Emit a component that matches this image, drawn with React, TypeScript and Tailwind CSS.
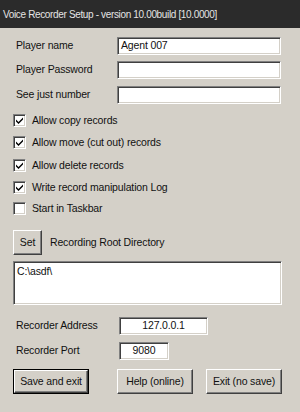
import React from "react";

const sunken =
  "bg-white border border-t-[#808080] border-l-[#808080] border-b-white border-r-white shadow-[inset_1px_1px_0_#404040,inset_-1px_-1px_0_#d4d0c8]";

const raised =
  "bg-[#d4d0c8] border border-t-white border-l-white border-b-[#404040] border-r-[#404040] shadow-[inset_-1px_-1px_0_#808080]";

const Field = (props: {
  label: string;
  value?: string;
  top: string;
  width?: string;
  labelWidth?: string;
  center?: boolean;
}) => {
  const { label, value, top, width, labelWidth, center } = props;
  return (
    <div className={`flex items-center h-[18px] ${top}`}>
      <span className={`${labelWidth ?? "w-[117px]"} shrink-0 pl-[16px] whitespace-nowrap`}>{label}</span>
      <div
        className={`${sunken} h-[18px] ${width ?? "w-[164px]"} shrink-0 flex items-center px-[3px] ${
          center ? "justify-center" : ""
        }`}
      >
        {value}
      </div>
    </div>
  );
};

const Check = (props: { label: string; checked?: boolean; top: string }) => {
  const { label, checked, top } = props;
  return (
    <div className={`flex items-center h-[13px] pl-[13px] ${top}`}>
      <div className={`${sunken} w-[13px] h-[13px] shrink-0 flex items-center justify-center`}>
        {checked && (
          <svg width="9" height="9" viewBox="0 0 9 9">
            <path d="M1 3.5 L3.5 6 L8 1.5 L8 3.5 L3.5 8 L1 5.5 Z" fill="#000" />
          </svg>
        )}
      </div>
      <span className="ml-[6px] whitespace-nowrap">{label}</span>
    </div>
  );
};

const Button = (props: { label: string; width: string; primary?: boolean; className?: string }) => {
  const { label, width, primary, className } = props;
  if (primary) {
    return (
      <div className={`border border-black ${width} h-[25px] shrink-0 flex ${className ?? ""}`}>
        <div className={`${raised} flex-1 flex items-center justify-center`}>{label}</div>
      </div>
    );
  }
  return (
    <div className={`${raised} ${width} h-[25px] shrink-0 flex items-center justify-center ${className ?? ""}`}>
      {label}
    </div>
  );
};

export default function App() {
  return (
    <div
      className="w-[300px] h-[412px] bg-[#d4d0c8] text-[10.5px] tracking-[-0.15px] text-[#111] flex flex-col overflow-hidden"
      style={{ fontFamily: '"Liberation Sans", Arial, sans-serif' }}
    >
      <div className="h-[28px] shrink-0 bg-[#2b2b2b] text-[#e4e4e4] text-[10px] tracking-[-0.35px] flex items-center pl-[3px] whitespace-nowrap">
        Voice Recorder Setup - version 10.00build [10.0000]
      </div>

      <Field label="Player name" value="Agent 007" top="mt-[9px]" />
      <Field label="Player Password" top="mt-[6px]" />
      <Field label="See just number" top="mt-[7px]" />

      <Check label="Allow copy records" checked top="mt-[10px]" />
      <Check label="Allow move (cut out) records" checked top="mt-[9px]" />
      <Check label="Allow delete records" checked top="mt-[10px]" />
      <Check label="Write record manipulation Log" checked top="mt-[9px]" />
      <Check label="Start in Taskbar" top="mt-[8px]" />

      <div className="flex items-center mt-[15px] pl-[13px]">
        <Button label="Set" width="w-[29px]" className="h-[20px]" />
        <span className="ml-[8px]">Recording Root Directory</span>
      </div>

      <div className={`${sunken} ml-[13px] mt-[6px] w-[269px] h-[44px] shrink-0 px-[3px] py-[2px]`}>C:\asdf\</div>

      <Field label="Recorder Address" value="127.0.0.1" top="mt-[12px]" width="w-[89px]" labelWidth="w-[119px]" center />
      <Field label="Recorder Port" value="9080" top="mt-[7px]" width="w-[50px]" labelWidth="w-[119px]" center />

      <div className="flex mt-[9px] pl-[13px]">
        <Button label="Save and exit" width="w-[76px]" primary />
        <Button label="Help (online)" width="w-[76px]" className="ml-[28px]" />
        <Button label="Exit (no save)" width="w-[76px]" className="ml-[13px]" />
      </div>
    </div>
  );
}
